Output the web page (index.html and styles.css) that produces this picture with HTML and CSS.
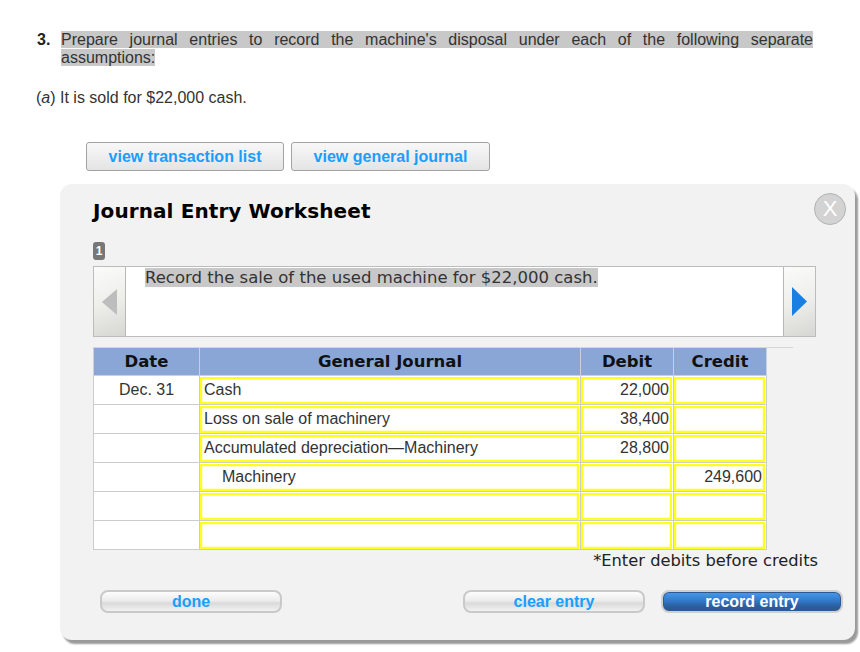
FILE: index.html
```html
<!DOCTYPE html>
<html>
<head>
<meta charset="utf-8">
<link rel="stylesheet" href="styles.css">
</head>
<body>
<div class="question">
  <span class="qnum">3.</span>
  <p class="qtext"><span class="hl">Prepare journal entries to record the machine's disposal under each of the following separate assumptions:</span></p>
</div>
<p class="part">(<i>a</i>) It is sold for $22,000 cash.</p>

<div class="toolbar">
  <div class="tbtn">view transaction list</div>
  <div class="tbtn wide">view general journal</div>
</div>

<div class="panel">
  <div class="head">
    <div class="title">Journal Entry Worksheet</div>
    <div class="close">X</div>
  </div>
  <div class="badge">1</div>
  <div class="desc">
    <div class="nav nav-left">
      <svg width="16" height="26" viewBox="0 0 16 26"><polygon points="15,0 15,26 0,13" fill="#bdbdbd"/></svg>
    </div>
    <div class="desc-text"><span class="hl">Record the sale of the used machine for $22,000 cash.</span></div>
    <div class="nav nav-right">
      <svg width="15" height="29" viewBox="0 0 15 29"><polygon points="0,0 15,14.5 0,29" fill="#1a7fe2"/></svg>
    </div>
  </div>
  <div class="jwrap">
    <table class="journal">
      <thead>
        <tr>
          <th class="c-date">Date</th>
          <th class="c-gj">General Journal</th>
          <th class="c-amt">Debit</th>
          <th class="c-amt">Credit</th>
        </tr>
      </thead>
      <tbody>
        <tr>
          <td class="date">Dec. 31</td>
          <td><div class="cell">Cash</div></td>
          <td><div class="cell num">22,000</div></td>
          <td><div class="cell num"></div></td>
        </tr>
        <tr>
          <td class="date"></td>
          <td><div class="cell">Loss on sale of machinery</div></td>
          <td><div class="cell num">38,400</div></td>
          <td><div class="cell num"></div></td>
        </tr>
        <tr>
          <td class="date"></td>
          <td><div class="cell">Accumulated depreciation—Machinery</div></td>
          <td><div class="cell num">28,800</div></td>
          <td><div class="cell num"></div></td>
        </tr>
        <tr>
          <td class="date"></td>
          <td><div class="cell indent">Machinery</div></td>
          <td><div class="cell num"></div></td>
          <td><div class="cell num">249,600</div></td>
        </tr>
        <tr>
          <td class="date"></td>
          <td><div class="cell"></div></td>
          <td><div class="cell num"></div></td>
          <td><div class="cell num"></div></td>
        </tr>
        <tr>
          <td class="date"></td>
          <td><div class="cell"></div></td>
          <td><div class="cell num"></div></td>
          <td><div class="cell num"></div></td>
        </tr>
      </tbody>
    </table>
  </div>
  <div class="note">*Enter debits before credits</div>
  <div class="actions">
    <div class="abtn">done</div>
    <div class="abtn clear">clear entry</div>
    <div class="abtn record">record entry</div>
  </div>
</div>
</body>
</html>
```
FILE: styles.css
```css
html, body {
  margin: 0;
  padding: 0;
  background: #fff;
}
body {
  width: 860px;
  height: 652px;
  overflow: hidden;
  font-family: "Liberation Sans", Arial, sans-serif;
  color: #333;
}
.question {
  display: flex;
  margin: 31px 0 0 37px;
  font-size: 16px;
  line-height: 18px;
}
.qnum {
  width: 24px;
  flex: none;
  font-weight: bold;
  color: #222;
}
.qtext {
  margin: 0;
  width: 752px;
  text-align: justify;
}
.hl {
  background: #c8c8c8;
}
.part {
  margin: 22px 0 0 36px;
  font-size: 16px;
  line-height: 18px;
}
.toolbar {
  display: flex;
  gap: 7px;
  margin: 35px 0 0 86px;
}
.tbtn {
  width: 198px;
  height: 29px;
  box-sizing: border-box;
  border: 1px solid #a3a3a3;
  border-radius: 3px;
  background: linear-gradient(#f8f8f8, #e4e4e4);
  color: #1a9eff;
  font-weight: bold;
  font-size: 16px;
  display: flex;
  align-items: center;
  justify-content: center;
}
.tbtn.wide {
  width: 199px;
}
.panel {
  margin: 13px 0 0 60px;
  width: 795px;
  height: 456px;
  box-sizing: border-box;
  background: #f2f2f2;
  border-radius: 12px;
  box-shadow: 3px 4px 2px #9a9a9a;
  padding: 9px 9px 0 33px;
}
.head {
  display: flex;
  justify-content: space-between;
  align-items: center;
  height: 32px;
}
.title {
  font-family: "DejaVu Sans", Verdana, sans-serif;
  font-weight: bold;
  font-size: 20px;
  letter-spacing: 0.1px;
  color: #000;
  margin-top: 3px;
}
.close {
  width: 32px;
  height: 32px;
  box-sizing: border-box;
  border-radius: 50%;
  background: #d3d3d3;
  border: 1px solid #b3b3b3;
  color: #fff;
  font-size: 22px;
  display: flex;
  align-items: center;
  justify-content: center;
}
.badge {
  margin-top: 17px;
  width: 12px;
  height: 18px;
  background: #777;
  border-radius: 3px;
  color: #fff;
  font-weight: bold;
  font-size: 12px;
  line-height: 18px;
  text-align: center;
}
.desc {
  margin-top: 6px;
  width: 723px;
  height: 71px;
  box-sizing: border-box;
  border: 1px solid #bcbcbc;
  background: #fff;
  display: flex;
}
.nav {
  width: 31px;
  flex: none;
  background: linear-gradient(160deg, #fbfbfb 0%, #eeeeea 50%, #d6d6d2 100%);
  display: flex;
  align-items: center;
  justify-content: center;
}
.nav-left {
  border-right: 1px solid #b8b8b8;
}
.nav-right {
  border-left: 1px solid #b8b8b8;
}
.desc-text {
  flex: 1;
  padding: 1px 10px 0 19px;
  font-family: "DejaVu Sans", Verdana, sans-serif;
  font-size: 16.5px;
  line-height: 20px;
  color: #333;
}
.jwrap {
  margin-top: 10px;
  width: 700px;
  border-top: 1px solid #d6d6d6;
}
.journal {
  width: 673px;
  border-collapse: collapse;
  table-layout: fixed;
}
.journal th {
  background: #8aa6d6;
  height: 27px;
  padding: 0;
  font-family: "DejaVu Sans", Verdana, sans-serif;
  font-weight: bold;
  font-size: 16.5px;
  color: #111;
  border: 1px solid #c9cfdc;
  border-top: none;
}
.c-date { width: 105px; }
.c-gj { width: 380px; }
.c-amt { width: 92px; }
.journal td {
  border: 1px solid #cccccc;
  padding: 0;
  height: 28px;
  background: #fff;
  font-size: 16px;
}
.journal td.date {
  text-align: center;
}
.cell {
  height: 27px;
  box-sizing: border-box;
  border: 2px solid #ffff20;
  box-shadow: inset 0 0 0 1px #fffcc8;
  padding: 0 1px 0 2px;
  line-height: 22px;
  margin-right: 1px;
  white-space: nowrap;
  overflow: hidden;
}
.cell.num {
  text-align: right;
}
.cell.indent {
  padding-left: 20px;
}
.note {
  width: 725px;
  text-align: right;
  margin-top: 1px;
  font-family: "DejaVu Sans", Verdana, sans-serif;
  font-size: 16.3px;
  line-height: 19px;
  color: #222;
}
.actions {
  display: flex;
  margin-top: 20px;
  padding-left: 7px;
}
.abtn {
  flex: none;
  width: 182px;
  height: 23px;
  box-sizing: border-box;
  border: 2px solid #c9c9c9;
  border-radius: 8px;
  background: linear-gradient(#fdfdfd 0%, #ececec 45%, #dadada 60%, #f2f2f2 100%);
  color: #1a9eff;
  font-weight: bold;
  font-size: 16px;
  line-height: 17px;
  display: flex;
  align-items: center;
  justify-content: center;
}
.abtn.clear {
  margin-left: 181px;
}
.abtn.record {
  margin-left: 16px;
  color: #fff;
  background: linear-gradient(#4a9be9 0%, #3279cc 45%, #2b5f9f 75%, #2f568c 100%);
  border: 2px solid #cfcfcf;
  box-shadow: inset 0 0 0 1px #2d5a94;
}
```
